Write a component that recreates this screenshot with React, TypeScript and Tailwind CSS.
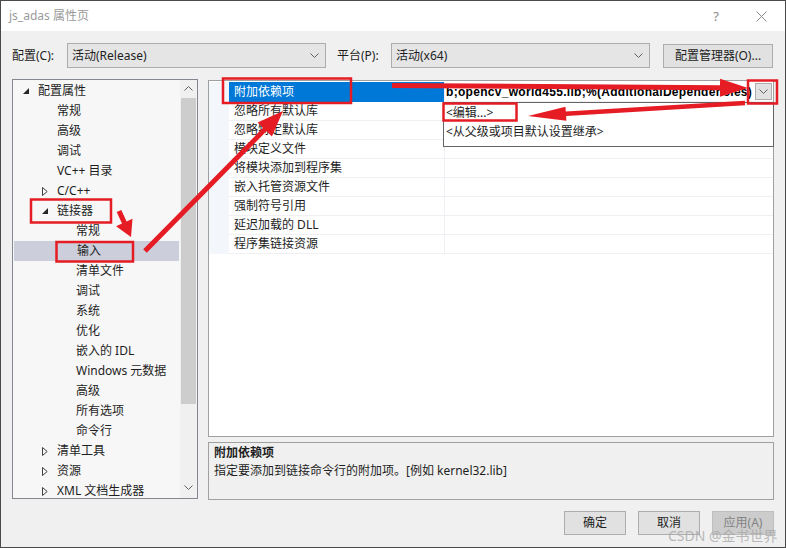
type TreeItem = { label: string; level: 1 | 2 | 3; toggle?: 'open' | 'closed'; selected?: boolean };

const treeItems: TreeItem[] = [
  { label: '配置属性', level: 1, toggle: 'open' },
  { label: '常规', level: 2 },
  { label: '高级', level: 2 },
  { label: '调试', level: 2 },
  { label: 'VC++ 目录', level: 2 },
  { label: 'C/C++', level: 2, toggle: 'closed' },
  { label: '链接器', level: 2, toggle: 'open' },
  { label: '常规', level: 3 },
  { label: '输入', level: 3, selected: true },
  { label: '清单文件', level: 3 },
  { label: '调试', level: 3 },
  { label: '系统', level: 3 },
  { label: '优化', level: 3 },
  { label: '嵌入的 IDL', level: 3 },
  { label: 'Windows 元数据', level: 3 },
  { label: '高级', level: 3 },
  { label: '所有选项', level: 3 },
  { label: '命令行', level: 3 },
  { label: '清单工具', level: 2, toggle: 'closed' },
  { label: '资源', level: 2, toggle: 'closed' },
  { label: 'XML 文档生成器', level: 2, toggle: 'closed' },
];

const props = [
  '附加依赖项',
  '忽略所有默认库',
  '忽略特定默认库',
  '模块定义文件',
  '将模块添加到程序集',
  '嵌入托管资源文件',
  '强制符号引用',
  '延迟加载的 DLL',
  '程序集链接资源',
];

const indent = { 1: 'pl-[10px]', 2: 'pl-[29px]', 3: 'pl-[48px]' };

function Chevron({ up = false }: { up?: boolean }) {
  return (
    <svg width="9" height="5" viewBox="0 0 9 5" className="shrink-0">
      <polyline
        points={up ? '0.5,4.5 4.5,0.5 8.5,4.5' : '0.5,0.5 4.5,4.5 8.5,0.5'}
        fill="none"
        stroke="#606060"
        strokeWidth="1"
      />
    </svg>
  );
}

function Toggle({ kind }: { kind: 'open' | 'closed' }) {
  if (kind === 'open')
    return (
      <svg width="6" height="6" viewBox="0 0 6 6">
        <polygon points="6,0 6,6 0,6" fill="#262626" />
      </svg>
    );
  return (
    <svg width="6" height="9" viewBox="0 0 6 9">
      <polygon points="0.5,0.5 5.2,4.5 0.5,8.5" fill="none" stroke="#404040" strokeWidth="1" />
    </svg>
  );
}

function Combo({ text }: { text: string }) {
  return (
    <div className="w-[259px] h-[25px] flex items-center justify-between pl-[4px] pr-[6px] bg-[#e5e5e5] border border-[#adadad] text-[#1e1e1e]">
      <span>{text}</span>
      <Chevron />
    </div>
  );
}

function Button({ label, disabled = false }: { label: string; disabled?: boolean }) {
  return (
    <div
      className={
        disabled
          ? 'w-[62px] h-[24px] flex items-center justify-center bg-[#cccccc] border border-[#bfbfbf] text-[#838383]'
          : 'w-[62px] h-[24px] flex items-center justify-center bg-[#e1e1e1] border border-[#adadad] text-[#1e1e1e]'
      }
    >
      {label}
    </div>
  );
}

// arrow polygon from start to tip
function arrow(x1: number, y1: number, x2: number, y2: number, w: number, hl: number, hw: number) {
  const len = Math.hypot(x2 - x1, y2 - y1);
  const dx = (x2 - x1) / len;
  const dy = (y2 - y1) / len;
  const nx = -dy;
  const ny = dx;
  const bx = x2 - dx * hl;
  const by = y2 - dy * hl;
  const p = (x: number, y: number) => `${x.toFixed(1)},${y.toFixed(1)}`;
  return [
    p(x1 + (nx * w) / 2, y1 + (ny * w) / 2),
    p(bx + (nx * w) / 2, by + (ny * w) / 2),
    p(bx + (nx * hw) / 2, by + (ny * hw) / 2),
    p(x2, y2),
    p(bx - (nx * hw) / 2, by - (ny * hw) / 2),
    p(bx - (nx * w) / 2, by - (ny * w) / 2),
    p(x1 - (nx * w) / 2, y1 - (ny * w) / 2),
  ].join(' ');
}

function Annotations() {
  const red = '#e51c23';
  return (
    <svg width="786" height="548" className="absolute -left-px -top-px pointer-events-none">
      <rect x="223" y="78.5" width="128" height="24.5" fill="none" stroke={red} strokeWidth="2.5" />
      <rect x="748" y="80.5" width="29" height="23" fill="none" stroke={red} strokeWidth="2.5" />
      <rect x="443.5" y="103.5" width="73" height="17" fill="none" stroke={red} strokeWidth="2.5" />
      <rect x="31" y="199.5" width="80" height="23" fill="none" stroke={red} strokeWidth="2.5" />
      <rect x="56.5" y="242" width="76.5" height="19.5" fill="none" stroke={red} strokeWidth="2.5" />
      <polygon points={arrow(392, 85.5, 748, 88, 5, 28, 18)} fill={red} />
      <polygon points={arrow(745, 103, 528, 116, 4.5, 38, 14)} fill={red} />
      <polygon points={arrow(145, 251, 283, 111, 5, 26, 20)} fill={red} />
      <polygon points={arrow(119, 211, 131, 237, 5, 16, 18)} fill={red} />
    </svg>
  );
}

export default function App() {
  return (
    <div className="relative w-[786px] h-[548px] overflow-hidden flex flex-col bg-[#f0f0f0] border border-[#4a4a4a] text-[12px] leading-[18px] text-[#1e1e1e] font-['Noto_Sans','Noto_Sans_CJK_SC',sans-serif]">
      {/* title bar */}
      <div className="h-[30px] shrink-0 flex items-center bg-white text-[#9a9a9a]">
        <span className="pl-[8px]">js_adas 属性页</span>
        <span className="ml-auto mr-[37px] text-[13px] text-[#8a8a8a]">?</span>
        <svg width="11" height="11" viewBox="0 0 11 11" className="mr-[18px]">
          <path d="M0.5 0.5 L10.5 10.5 M10.5 0.5 L0.5 10.5" stroke="#8a8a8a" strokeWidth="1" />
        </svg>
      </div>

      <div className="px-[11px] flex flex-col">
        {/* configuration row */}
        <div className="mt-[12px] h-[25px] flex items-center">
          <span className="w-[55px]">配置(C):</span>
          <Combo text="活动(Release)" />
          <span className="ml-[11px] w-[54px]">平台(P):</span>
          <Combo text="活动(x64)" />
          <div className="ml-[13px] w-[110px] h-[24px] flex items-center justify-center bg-[#e1e1e1] border border-[#adadad]">
            配置管理器(O)...
          </div>
        </div>

        <div className="mt-[11px] flex">
          {/* tree */}
          <div className="w-[186px] h-[420px] flex border border-[#828790] bg-[#f7f7f7]">
            <div className="flex-1 pt-[1px] overflow-hidden">
              {treeItems.map((it, i) => (
                <div
                  key={i}
                  className={`h-[20px] shrink-0 flex items-center ${indent[it.level]} ${
                    it.selected ? 'bg-[#cccedb] mx-[1px]' : ''
                  }`}
                >
                  <div className="w-[15px] flex items-center">{it.toggle && <Toggle kind={it.toggle} />}</div>
                  <span className="whitespace-nowrap">{it.label}</span>
                </div>
              ))}
            </div>
            <div className="w-[17px] flex flex-col bg-[#f0f0f0]">
              <div className="h-[17px] flex items-center justify-center">
                <Chevron up />
              </div>
              <div className="mx-[1px] mt-[1px] h-[306px] bg-[#cdcdcd]" />
              <div className="flex-1" />
              <div className="h-[17px] mb-[2px] flex items-center justify-center">
                <Chevron />
              </div>
            </div>
          </div>

          {/* right side */}
          <div className="ml-[10px] w-[566px] flex flex-col">
            <div className="relative mt-[1px] h-[357px] border border-[#a0a0a0] bg-white pt-[1px]">
              {props.map((p, i) => (
                <div key={i} className={i === 0 ? 'h-[20px] flex' : 'h-[19px] flex'}>
                  <div className="w-[20px] bg-[#f3f6fb]" />
                  <div
                    className={
                      i === 0
                        ? 'w-[215px] flex items-center pl-[5px] bg-[#0078d7] text-white'
                        : 'w-[215px] flex items-center pl-[5px] border-b border-[#f0f0f4]'
                    }
                  >
                    {p}
                  </div>
                  <div className="flex-1 min-w-0 flex items-center border-l border-b border-[#f0f0f4]">
                    {i === 0 && (
                      <>
                        <span className="pl-[1px] font-['Liberation_Sans',sans-serif] font-bold tracking-[0.3px] whitespace-nowrap text-black overflow-hidden">
                          b;opencv_world455.lib;%(AdditionalDependencies)
                        </span>
                        <div className="ml-auto mr-[1px] shrink-0 w-[17px] h-[17px] flex items-center justify-center bg-[#e1e1e1] border border-[#adadad]">
                          <Chevron />
                        </div>
                      </>
                    )}
                  </div>
                </div>
              ))}

              {/* dropdown popup */}
              <div className="absolute left-[234px] top-[21px] w-[331px] h-[45px] bg-white border border-[#646464] pl-[2px]">
                <div className="h-[19px] flex items-center">&lt;编辑...&gt;</div>
                <div className="h-[19px] flex items-center">&lt;从父级或项目默认设置继承&gt;</div>
              </div>
            </div>

            <div className="mt-[5px] h-[58px] border border-[#a0a0a0] pl-[5px] pt-[1px]">
              <div className="font-bold">附加依赖项</div>
              <div>指定要添加到链接命令行的附加项。[例如 kernel32.lib]</div>
            </div>
          </div>
        </div>

        {/* buttons */}
        <div className="mt-[11px] flex justify-end gap-[12px]">
          <Button label="确定" />
          <Button label="取消" />
          <Button label="应用(A)" disabled />
        </div>
      </div>

      <div className="absolute left-[667px] top-[526px] text-[14px] leading-[18px] text-[#a8a8a8]/80">
        CSDN @金书世界
      </div>

      <Annotations />
    </div>
  );
}
